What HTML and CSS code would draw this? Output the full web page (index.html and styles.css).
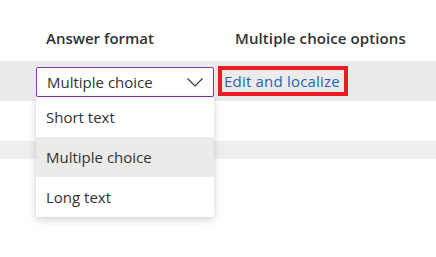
FILE: index.html
```html
<!DOCTYPE html>
<html lang="en">
<head>
    <meta charset="UTF-8">
    <title>Answer format</title>
    <link rel="stylesheet" href="styles.css">
</head>
<body>
    <div class="table">
        <div class="header">
            <div class="col-format">Answer format</div>
            <div class="col-options">Multiple choice options</div>
        </div>

        <div class="row selected">
            <div class="col-format">
                <div class="dropdown">
                    <span>Multiple choice</span>
                    <svg class="chevron" width="16" height="9" viewBox="0 0 16 9">
                        <path d="M0.5 0.5 L8 8 L15.5 0.5" fill="none" stroke="#323130" stroke-width="1.1"/>
                    </svg>
                </div>
            </div>
            <div class="col-options">
                <a class="edit-link" href="#">Edit and localize</a>
            </div>
        </div>

        <div class="row"></div>
        <div class="row band"></div>

        <ul class="menu">
            <li>Short text</li>
            <li class="active">Multiple choice</li>
            <li>Long text</li>
        </ul>
    </div>
</body>
</html>
```

FILE: styles.css
```css
html, body {
    height: 100%;
}

body {
    margin: 0;
    background: #fff;
    font-family: "Open Sans", "Noto Sans", sans-serif;
    font-size: 15px;
    color: #323130;
}

.table {
    position: relative;
    min-height: 257px;
}

.header {
    display: flex;
    height: 61px;
    align-items: flex-start;
    box-sizing: border-box;
    padding-top: 28px;
    font-weight: 600;
    line-height: 20px;
}

.header .col-format {
    padding-left: 10px;
}

.header .col-options {
    padding-left: 17px;
    letter-spacing: 0.1px;
}

.col-format {
    width: 182px;
    margin-left: 36px;
    box-sizing: border-box;
}

.row {
    display: flex;
    height: 40px;
}

.row.selected {
    background: #edebe9;
}

.row.band {
    height: 18px;
    background: #f0efee;
}

.dropdown {
    display: flex;
    align-items: center;
    justify-content: space-between;
    width: 178px;
    height: 30px;
    margin-top: 6px;
    box-sizing: border-box;
    padding: 0 10px 0 10px;
    border: 1px solid #8a35a8;
    border-radius: 2px;
    background: #fff;
}

.dropdown span {
    line-height: 20px;
}

.chevron {
    display: block;
}

.edit-link {
    display: inline-block;
    margin-top: 5px;
    padding: 1px 4px 1px 2px;
    border: 4px solid #ed1c24;
    color: #1b66b8;
    text-decoration: none;
    line-height: 20px;
    letter-spacing: 0.2px;
}

.menu {
    position: absolute;
    top: 97px;
    left: 36px;
    z-index: 2;
    width: 178px;
    margin: 0;
    padding: 0;
    list-style: none;
    background: #fff;
    border-radius: 2px;
    box-shadow: 0 3px 8px rgba(0, 0, 0, 0.16), 0 0 2px rgba(0, 0, 0, 0.1);
}

.menu li {
    height: 40px;
    line-height: 40px;
    padding-left: 10px;
}

.menu li.active {
    background: #edebe9;
}
```
